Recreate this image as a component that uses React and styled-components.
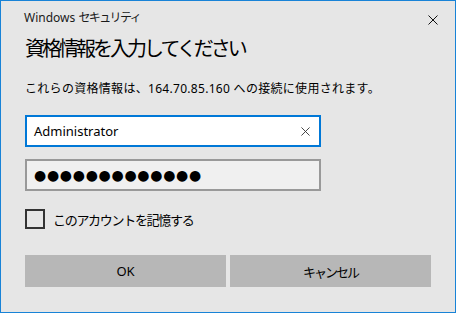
import React from 'react';
import styled, { createGlobalStyle } from 'styled-components';

const GlobalStyle = createGlobalStyle`
    html, body {
        margin: 0;
        padding: 0;
        background: #e6e6e6;
    }
    body {
        font-family: "Noto Sans", "Noto Sans CJK JP", sans-serif;
        color: #000;
    }
`

const Window = styled.div`
    width: 456px;
    height: 313px;
    box-sizing: border-box;
    border: 1px solid #1883d7;
    background: #e6e6e6;
    display: flex;
    flex-direction: column;
`

const Header = styled.div`
    display: flex;
    justify-content: space-between;
    align-items: center;
    padding: 8px 17px 0 23px;
    height: 18px;
`

const Caption = styled.span`
    font-size: 12px;
    line-height: 16px;
    color: #1a1a1a;
`

const Kana = styled.span`
    letter-spacing: -1.6px;
`

const CloseButton = styled.div`
    width: 10px;
    height: 10px;
    display: flex;
    margin-top: 3px;
`

const Body = styled.div`
    display: flex;
    flex-direction: column;
    padding: 0 24px;
`

const Title = styled.h1`
    margin: 8px 0 0;
    font-size: 20px;
    font-weight: 400;
    line-height: 28px;
    letter-spacing: -3px;
    color: #000;
`

const Description = styled.p`
    margin: 18px 0 0;
    font-size: 12px;
    line-height: 16px;
    letter-spacing: 0.3px;
`

const Field = styled.div`
    width: 296px;
    height: 32px;
    box-sizing: border-box;
    border: 2px solid ${props => props.focused ? '#0078d7' : '#999999'};
    background: ${props => props.focused ? '#ffffff' : '#f0f0f0'};
    margin-top: ${props => props.gap}px;
    display: flex;
    align-items: center;
    padding: 0 9px 0 7px;
    font-size: 13px;
`

const FieldText = styled.span`
    flex: 1;
`

const Dots = styled.span`
    flex: 1;
    font-family: "DejaVu Sans", sans-serif;
    font-size: 14px;
    letter-spacing: 0.7px;
`

const CheckRow = styled.label`
    display: flex;
    align-items: center;
    gap: 8px;
    margin-top: 18px;
    font-size: 13px;
`

const CheckText = styled.span`
    letter-spacing: -1.3px;
`

const Box = styled.span`
    width: 20px;
    height: 20px;
    box-sizing: border-box;
    border: 2px solid #333333;
`

const Buttons = styled.div`
    display: grid;
    grid-template-columns: 1fr 1fr;
    gap: 4px;
    margin-top: 26px;
`

const Button = styled.div`
    height: 32px;
    background: #b7b7b7;
    display: flex;
    align-items: center;
    justify-content: center;
    font-size: 13px;
    letter-spacing: ${props => props.tight ? '-2px' : '0'};
    color: #000;
`

const Cross = ({ size, color }) => (
    <svg width={size} height={size} viewBox="0 0 10 10">
        <path d="M0.5 0.5 L9.5 9.5 M9.5 0.5 L0.5 9.5" stroke={color} strokeWidth="1" fill="none" />
    </svg>
)

const App = () => {
    return (
        <>
            <GlobalStyle />
            <Window>
                <Header>
                    <Caption>Windows <Kana>セキュリティ</Kana></Caption>
                    <CloseButton><Cross size={10} color="#111" /></CloseButton>
                </Header>
                <Body>
                    <Title>資格情報を入力してください</Title>
                    <Description>これらの資格情報は、164.70.85.160 への接続に使用されます。</Description>
                    <Field focused gap={18}>
                        <FieldText>Administrator</FieldText>
                        <Cross size={9} color="#333" />
                    </Field>
                    <Field gap={12}>
                        <Dots>●●●●●●●●●●●●●</Dots>
                    </Field>
                    <CheckRow>
                        <Box />
                        <CheckText>このアカウントを記憶する</CheckText>
                    </CheckRow>
                    <Buttons>
                        <Button>OK</Button>
                        <Button tight>キャンセル</Button>
                    </Buttons>
                </Body>
            </Window>
        </>
    );
};

export default App;
